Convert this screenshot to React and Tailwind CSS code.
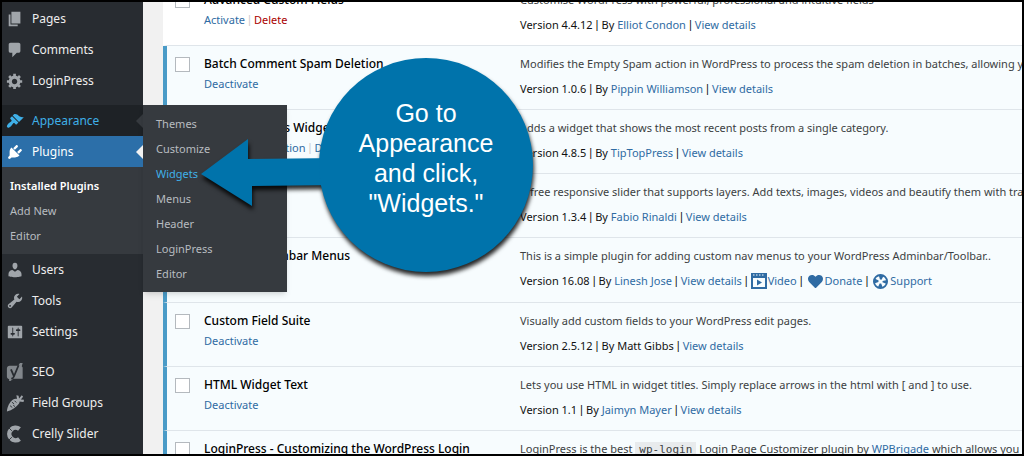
import React from 'react';
import { FaHeart } from 'react-icons/fa';

const iconPaths = {
  pages: 'M6 15V2h10v13H6zm-1 1h8v2H3V5h2v11z',
  comments: 'M5 2h9c1.1 0 2 .9 2 2v7c0 1.1-.9 2-2 2h-2l-5 5v-5H5c-1.1 0-2-.9-2-2V4c0-1.1.9-2 2-2z',
  gear: 'M18 12h-2.18c-.17.7-.44 1.35-.81 1.93l1.54 1.54-2.1 2.1-1.54-1.54c-.58.36-1.23.63-1.91.79V19H8v-2.18c-.68-.16-1.33-.43-1.91-.79l-1.54 1.54-2.12-2.12 1.54-1.54c-.36-.58-.63-1.23-.79-1.91H1V9.03h2.17c.16-.7.44-1.35.8-1.94L2.43 5.55l2.1-2.1 1.54 1.54c.58-.37 1.24-.64 1.93-.81V2h3v2.18c.68.16 1.33.43 1.91.79l1.54-1.54 2.12 2.12-1.54 1.54c.36.59.64 1.24.8 1.94H18V12zm-8.5 1.5c1.66 0 3-1.34 3-3s-1.34-3-3-3-3 1.34-3 3 1.34 3 3 3z',
  appearance: 'M14.48 11.06L7.41 3.99l1.5-1.5c.5-.56 2.3-.47 3.51.32 1.21.8 1.43 1.28 2.91 2.1 1.18.64 2.45 1.26 4.45.85zm-.71.71L6.7 4.7 4.93 6.47c-.39.39-.39 1.02 0 1.41l1.06 1.06c.39.39.39 1.03 0 1.42-.6.6-1.43 1.11-2.21 1.69-.35.26-.7.53-1.01.84C1.43 14.23.4 16.08 1.4 17.07c.99 1 2.84-.03 4.18-1.36.31-.31.58-.66.85-1.02.57-.78 1.08-1.61 1.69-2.21.39-.39 1.02-.39 1.41 0l1.06 1.06c.39.39 1.02.39 1.41 0z',
  plugins: 'M13.11 4.36L9.87 7.6 8 5.73l3.24-3.24c.35-.34 1.05-.2 1.56.32.52.51.66 1.21.31 1.55zm-8 1.77l.91-1.12 9.01 9.01-1.19.84c-.71.71-2.63 1.16-3.82 1.16H6.14L4.9 17.26c-.59.59-1.54.59-2.12 0-.59-.58-.59-1.53 0-2.12l1.24-1.24v-3.88c0-1.13.4-3.19 1.09-3.89zm7.26 3.97l3.24-3.24c.34-.35 1.04-.21 1.55.31.52.51.66 1.21.31 1.55l-3.24 3.25z',
  users: 'M10 9.25c-2.27 0-2.73-3.44-2.73-3.44C7 4.02 7.82 2 9.97 2c2.16 0 2.98 2.02 2.71 3.81 0 0-.41 3.44-2.68 3.44zm0 2.57L12.72 10c2.39 0 4.52 2.33 4.52 4.53v2.49s-3.65 1.13-7.24 1.13c-3.65 0-7.24-1.13-7.24-1.13v-2.49c0-2.25 1.94-4.48 4.47-4.48z',
  tools: 'M16.68 9.77c-1.34 1.34-3.3 1.67-4.95.99l-5.41 6.52c-.99.99-2.59.99-3.58 0s-.99-2.59 0-3.57l6.52-5.42c-.68-1.65-.35-3.61.99-4.95 1.28-1.28 3.12-1.62 4.72-1.06l-2.89 2.89 2.82 2.82 2.86-2.87c.53 1.58.18 3.39-1.08 4.65zM3.81 16.21c.4.39 1.04.39 1.43 0 .4-.4.4-1.04 0-1.43-.39-.4-1.03-.4-1.43 0-.39.39-.39 1.03 0 1.43z',
  settings: 'M18 16V4c0-.55-.45-1-1-1H3c-.55 0-1 .45-1 1v12c0 .55.45 1 1 1h14c.55 0 1-.45 1-1zM8 11h1c.55 0 1 .45 1 1s-.45 1-1 1H8v1.5c0 .28-.22.5-.5.5s-.5-.22-.5-.5V13H6c-.55 0-1-.45-1-1s.45-1 1-1h1V5.5c0-.28.22-.5.5-.5s.5.22.5.5V11zm5-2h-1c-.55 0-1-.45-1-1s.45-1 1-1h1V5.5c0-.28.22-.5.5-.5s.5.22.5.5V7h1c.55 0 1 .45 1 1s-.45 1-1 1h-1v5.5c0 .28-.22.5-.5.5s-.5-.22-.5-.5V9z',
};

const topItems = [
  { label: 'Pages', icon: 'pages' },
  { label: 'Comments', icon: 'comments' },
  { label: 'LoginPress', icon: 'gear' },
];

const midItems = [
  { label: 'Users', icon: 'users' },
  { label: 'Tools', icon: 'tools' },
  { label: 'Settings', icon: 'settings' },
];

const bottomItems = [
  { label: 'SEO', icon: 'seo' },
  { label: 'Field Groups', icon: 'carrot' },
  { label: 'Crelly Slider', icon: 'crelly' },
];

const appearanceMenu = ['Themes', 'Customize', 'Widgets', 'Menus', 'Header', 'LoginPress', 'Editor'];

const plugins = [
  {
    name: 'Advanced Custom Fields',
    active: false,
    actions: ['Activate', 'Delete'],
    description: 'Customise WordPress with powerful, professional and intuitive fields',
    version: '4.4.12',
    author: 'Elliot Condon',
  },
  {
    name: 'Batch Comment Spam Deletion',
    active: true,
    actions: ['Deactivate'],
    description: 'Modifies the Empty Spam action in WordPress to process the spam deletion in batches, allowing you',
    version: '1.0.6',
    author: 'Pippin Williamson',
  },
  {
    name: 'Category Posts Widget',
    active: true,
    actions: ['Get Documentation', 'Deactivate'],
    description: 'Adds a widget that shows the most recent posts from a single category.',
    version: '4.8.5',
    author: 'TipTopPress',
  },
  {
    name: 'Crelly Slider',
    active: true,
    actions: ['Deactivate'],
    description: 'A free responsive slider that supports layers. Add texts, images, videos and beautify them with transitions',
    version: '1.3.4',
    author: 'Fabio Rinaldi',
  },
  {
    name: 'Custom Adminbar Menus',
    active: true,
    actions: ['Deactivate'],
    description: 'This is a simple plugin for adding custom nav menus to your WordPress Adminbar/Toolbar..',
    version: '16.08',
    author: 'Linesh Jose',
    extras: true,
  },
  {
    name: 'Custom Field Suite',
    active: true,
    actions: ['Deactivate'],
    description: 'Visually add custom fields to your WordPress edit pages.',
    version: '2.5.12',
    author: 'Matt Gibbs',
    plainAuthor: true,
  },
  {
    name: 'HTML Widget Text',
    active: true,
    actions: ['Deactivate'],
    description: 'Lets you use HTML in widget titles. Simply replace arrows in the html with [ and ] to use.',
    version: '1.1',
    author: 'Jaimyn Mayer',
  },
  {
    name: 'LoginPress - Customizing the WordPress Login',
    active: true,
    actions: ['Deactivate'],
    description: (
      <>
        LoginPress is the best{' '}
        <code className="bg-[#e8ebed] px-1 py-px font-['DejaVu_Sans_Mono',monospace]">wp-login</code>{' '}
        Login Page Customizer plugin by <TextLink>WPBrigade</TextLink> which allows you
      </>
    ),
    version: '1.0.15',
    author: 'WPBrigade',
  },
];

function TextLink({ children, className = 'text-[#2f6ba3]' }) {
  return <a href="#" className={className}>{children}</a>;
}

// Roboto has a much narrower bar than Noto Sans
function Pipe() {
  return <span className="font-['Roboto',sans-serif] text-[12px]">{' | '}</span>;
}

function MenuIcon({ name }) {
  if (name === 'seo') {
    return (
      <svg viewBox="0 0 20 20" className="size-[18px]" fill="none">
        <path d="M4 3h9.500L15.500 0h3L17.500 3.500 18.500 5v12.500H8L5 20H3.500V18C2 17.500 1 16.500 1 15V6c0-1.700 1.300-3 3-3z" fill="#82878c" />
        <path d="M5.500 7l3.200 7.300M14 2.500L8.800 15c-.6 1.600-1.500 2.300-3 2.400" stroke="#282c31" strokeWidth="2" />
      </svg>
    );
  }
  if (name === 'carrot') {
    return (
      <svg viewBox="0 0 20 20" className="size-[18px]" fill="currentColor">
        <path d="M12.500 5.500c2.600.5 3.400 3 1.800 5.200C11.800 14 7 17.800 1 19.500 1.500 14 4 9 7.500 6.500c1.600-1.200 3.400-1.500 5-1z" />
        <path d="M12.500 6.500L11.500 1.500l2.500.5.500 3 3-3.500L19 3l-2.500 3 3.500.5-.5 2.500-5-.8z" />
        <path d="M6.500 9l2.500 2M11.500 9.500l-2-2M4.500 13l2.500 2M10 14l-2-1.600" stroke="#282c31" fill="none" />
      </svg>
    );
  }
  if (name === 'crelly') {
    return (
      <svg viewBox="0 0 20 20" className="size-[18px]" fill="none" stroke="currentColor">
        <path d="M15 4.500A7 7 0 1 0 15 15.500" strokeWidth="5" />
        <path d="M3 3l3.500 3.500M3 17l3.500-3.500" stroke="#282c31" />
      </svg>
    );
  }
  return (
    <svg viewBox="0 0 20 20" className="size-[18px]" fill="currentColor">
      <path d={iconPaths[name]} />
    </svg>
  );
}

function MenuItem({ label, icon }) {
  return (
    <li>
      <a href="#" className="flex h-[31px] items-center gap-2 pl-1 text-[#eee]">
        <span className="flex w-[18px] justify-center text-[#a0a5aa]"><MenuIcon name={icon} /></span>
        {label}
      </a>
    </li>
  );
}

function Sidebar() {
  return (
    <nav className="relative z-10 w-[141px] shrink-0 bg-[#282c31] pt-px text-[12px]">
      <ul>
        {topItems.map(item => <MenuItem key={item.label} {...item} />)}
      </ul>

      <ul className="mt-[9px]">
        <li className="relative bg-[#1e2226]">
          <a href="#" className="flex h-[31px] items-center gap-2 pl-1 text-[#3fb0e8]">
            <span className="flex w-[18px] justify-center"><MenuIcon name="appearance" /></span>
            Appearance
          </a>
          <span className="absolute top-[9px] right-0 border-y-[7px] border-r-[7px] border-y-transparent border-r-[#363a3f]" />
          {/* Flyout */}
          <ul className="absolute top-0 left-full w-36 bg-[#363a3f] py-[6px] text-[11px] shadow-md">
            {appearanceMenu.map(label => (
              <li key={label}>
                <a
                  href="#"
                  className={`block px-[13px] leading-[25px] ${label === 'Widgets' ? 'text-[#3fb0e8]' : 'text-[#b8bcc0]'}`}
                >
                  {label}
                </a>
              </li>
            ))}
          </ul>
        </li>
        <li>
          <a href="#" className="relative flex h-[31px] items-center gap-2 bg-[#2c6fa9] pl-1 text-white">
            <span className="flex w-[18px] justify-center"><MenuIcon name="plugins" /></span>
            Plugins
            <span className="absolute top-[9px] right-0 border-y-[7px] border-r-[7px] border-y-transparent border-r-[#f1f1f1]" />
          </a>
          <ul className="bg-[#363a3f] px-2 py-[6px] text-[11px] leading-[25px] text-[#b8bcc0]">
            <li><a href="#" className="font-semibold text-white">Installed Plugins</a></li>
            <li><a href="#">Add New</a></li>
            <li><a href="#">Editor</a></li>
          </ul>
        </li>
        {midItems.map(item => <MenuItem key={item.label} {...item} />)}
      </ul>

      <ul className="mt-[9px]">
        {bottomItems.map(item => <MenuItem key={item.label} {...item} />)}
      </ul>
    </nav>
  );
}

function ExtraLinks() {
  return (
    <>
      <Pipe />
      <a href="#" className="text-[#2f6ba3]">
        <svg viewBox="0 0 16 16" className="mr-px inline size-4 align-[-4px]" fill="currentColor">
          <path fillRule="evenodd" d="M0 0h16v16H0zM2 5v9h12V5zM2 1.500v1h1.500v-1zm3 0v1h1.500v-1zm3 0v1h1.500v-1zm3 0v1h1.500v-1z" />
          <path d="M6 6.500v6l5-3z" />
        </svg>
        Video
      </a>
      <Pipe />
      <a href="#" className="text-[#2f6ba3]">
        <FaHeart className="mx-0.5 inline size-[15px] align-[-4px]" />
        Donate
      </a>
      <Pipe />
      <a href="#" className="text-[#2f6ba3]">
        <svg viewBox="0 0 16 16" className="mx-0.5 inline size-[15px] align-[-4px]" fill="none" stroke="currentColor">
          <circle cx="8" cy="8" r="7" strokeWidth="2" />
          <circle cx="8" cy="8" r="4.700" strokeWidth="5" strokeDasharray="3.690 3.690" strokeDashoffset="1.850" />
        </svg>
        Support
      </a>
    </>
  );
}

function PluginRow({ plugin }) {
  return (
    <tr
      className={`align-top *:border-b *:border-b-[#dfe5ea] ${plugin.extras ? 'h-[65px]' : 'h-16'} ${plugin.active ? 'bg-[#f7fcfe]' : 'bg-white'}`}
    >
      <td className={`border-l-4 pt-[11px] pl-2 ${plugin.active ? 'border-l-[#4a9bc7]' : 'border-l-white'}`}>
        <input
          type="checkbox"
          aria-label={`Select ${plugin.name}`}
          className="block size-[15px] appearance-none border border-[#b4b9be] bg-white"
        />
      </td>
      <td className="pt-2">
        <p className="text-[12px] leading-5 font-medium text-black">{plugin.name}</p>
        <p className="leading-5 text-[#ccc]">
          {plugin.actions.map((action, i) => (
            <React.Fragment key={action}>
              {i > 0 && <Pipe />}
              <TextLink className={action === 'Delete' ? 'text-[#a00]' : 'text-[#2f6ba3]'}>{action}</TextLink>
            </React.Fragment>
          ))}
        </p>
      </td>
      <td className="pt-2">
        <p className="leading-5 text-[#3c3f42]">{plugin.description}</p>
        <p className="mt-[5px] leading-5 text-[#111]">
          Version {plugin.version}<Pipe />By{' '}
          {plugin.plainAuthor ? plugin.author : <TextLink>{plugin.author}</TextLink>}
          <Pipe />
          <TextLink>View details</TextLink>
          {plugin.extras && <ExtraLinks />}
        </p>
      </td>
    </tr>
  );
}

function Callout() {
  return (
    <div className="absolute top-[55px] left-[199px] z-20 w-[336px]">
      <svg viewBox="0 0 336 218" className="block w-full overflow-visible drop-shadow-[1px_4px_2px_rgba(0,0,0,0.85)]" fill="#0073ab">
        <path d="M0 117L47 82v20l90-1v27l-86 1v20z" />
        <circle cx="225" cy="108" r="107" />
      </svg>
      <p className="absolute top-[41px] right-[4px] w-[214px] text-center font-['Liberation_Sans',sans-serif] text-[25px] leading-[30px] text-white">
        Go to<br />Appearance<br />and click,<br />&quot;Widgets.&quot;
      </p>
    </div>
  );
}

export default function App() {
  return (
    <div className="relative flex h-screen overflow-hidden border-2 border-black bg-[#f1f1f1] font-['Noto_Sans',sans-serif] text-[11px]">
      <Sidebar />
      <main className="min-w-0 flex-1 overflow-hidden pl-5">
        {/* The list is scrolled a little, so its first row is cut off */}
        <table className="-mt-5 w-full table-fixed border-separate border-spacing-0 whitespace-nowrap">
          <colgroup>
            <col className="w-[41px]" />
            <col className="w-79" />
            <col />
          </colgroup>
          <tbody>
            {plugins.map(plugin => <PluginRow key={plugin.name} plugin={plugin} />)}
          </tbody>
        </table>
      </main>
      <Callout />
    </div>
  );
}
